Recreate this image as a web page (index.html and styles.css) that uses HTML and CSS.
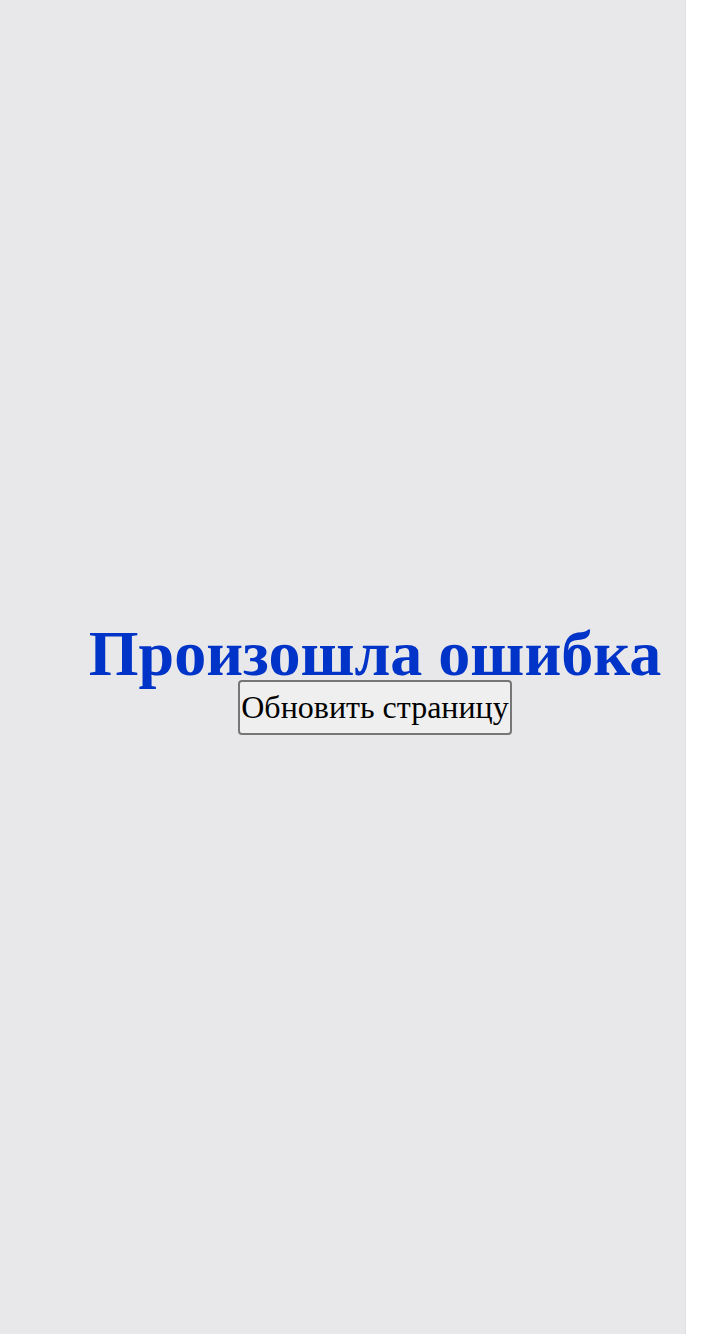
FILE: index.html
```html
<!DOCTYPE html>
<html lang="ru">
<head>
<meta charset="utf-8">
<title>Ошибка</title>
<link rel="stylesheet" href="styles.css">
</head>
<body>
<div class="screen">
  <div class="error">
    <h1 class="error-title">Произошла ошибка</h1>
    <button class="error-button" type="button">Обновить страницу</button>
  </div>
</div>
</body>
</html>
```

FILE: styles.css
```css
html, body {
  margin: 0;
  padding: 0;
  background: #ffffff;
}
body {
  overflow: hidden;
  font-family: "Liberation Serif", "Times New Roman", serif;
}
.screen {
  width: 685px;
  height: 1334px;
  background: #e8e8ea;
  border-right: 1px solid #e0e0e2;
  display: flex;
  align-items: center;
  justify-content: flex-start;
}
.error {
  width: 750px;
  flex-shrink: 0;
  margin-top: 18px;
  display: flex;
  flex-direction: column;
  align-items: center;
}
.error-title {
  margin: 0 0 -10.6px;
  font-family: "Liberation Serif", "Times New Roman", serif;
  font-weight: bold;
  font-size: 64px;
  line-height: 1.15;
  color: #0033c8;
}
.error-button {
  box-sizing: border-box;
  height: 55px;
  padding: 0 1px;
  border: 2px solid #767676;
  border-radius: 4px;
  background: #efefef;
  font-family: "Liberation Serif", "Times New Roman", serif;
  font-size: 32px;
  line-height: 1.15;
  color: #000;
}
```
